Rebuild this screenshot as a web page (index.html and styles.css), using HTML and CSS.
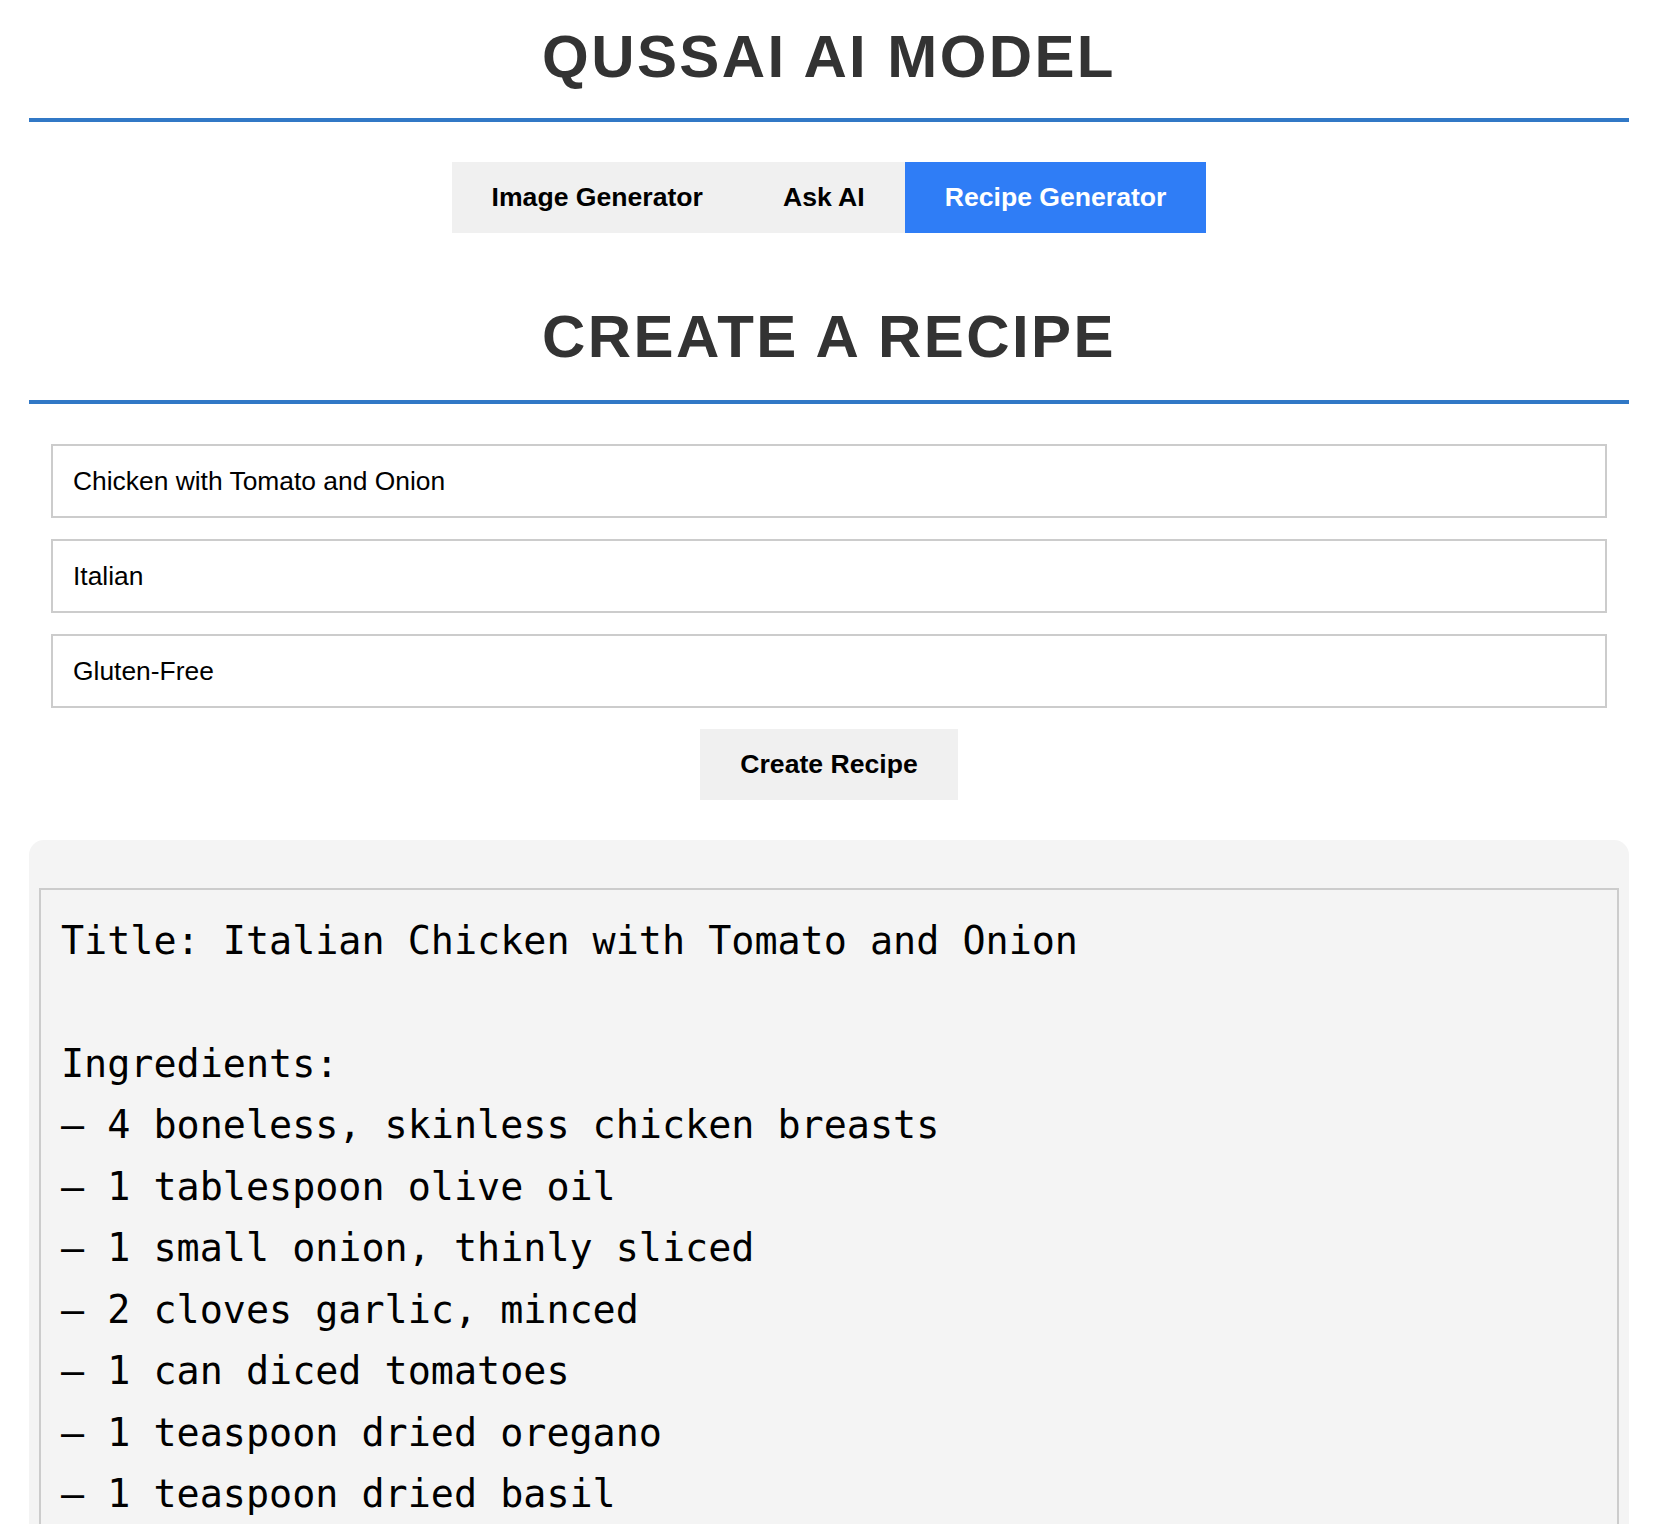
FILE: index.html
```html
<!DOCTYPE html>
<html lang="en">
<head>
<meta charset="utf-8">
<title>Qussai AI Model</title>
<link rel="stylesheet" href="styles.css">
</head>
<body>
<div class="page">
  <header class="site-header">
    <h1 class="site-title">QUSSAI AI MODEL</h1>
  </header>

  <nav class="tabs">
    <button class="tab">Image Generator</button>
    <button class="tab">Ask AI</button>
    <button class="tab tab-active">Recipe Generator</button>
  </nav>

  <section class="recipe">
    <h2 class="section-title">CREATE A RECIPE</h2>
    <form class="recipe-form">
      <input class="field" type="text" value="Chicken with Tomato and Onion">
      <input class="field" type="text" value="Italian">
      <input class="field" type="text" value="Gluten-Free">
      <div class="form-actions">
        <button type="button" class="action-btn">Create Recipe</button>
      </div>
    </form>

    <div class="result">
      <div class="result-text">Title: Italian Chicken with Tomato and Onion

Ingredients:
– 4 boneless, skinless chicken breasts
– 1 tablespoon olive oil
– 1 small onion, thinly sliced
– 2 cloves garlic, minced
– 1 can diced tomatoes
– 1 teaspoon dried oregano
– 1 teaspoon dried basil
– Salt and pepper to taste
– Fresh basil leaves, for garnish

Instructions:
1. Season the chicken breasts with salt and pepper.
2. Heat the olive oil in a large skillet over medium heat.</div>
    </div>
  </section>
</div>
</body>
</html>
```

FILE: styles.css
```css
* {
  box-sizing: border-box;
}

html, body {
  margin: 0;
  padding: 0;
  background: #ffffff;
}

body {
  font-family: "Liberation Sans", Arial, sans-serif;
  font-size: 24px;
  color: #000;
}

.page {
  max-width: 1600px;
  margin: 0 auto;
}

.site-header {
  padding-top: 22px;
  padding-bottom: 27px;
  border-bottom: 4px solid #3178c6;
}

.site-title,
.section-title {
  margin: 0;
  text-align: center;
  font-size: 60px;
  font-weight: bold;
  letter-spacing: 2.4px;
  color: #333333;
  line-height: normal;
}

.tabs {
  display: flex;
  justify-content: center;
  margin-top: 40px;
}

.tab,
.action-btn {
  font-family: "Liberation Sans", Arial, sans-serif;
  font-size: 26.6px;
  font-weight: bold;
  line-height: normal;
  padding: 20px 40px;
  border: none;
  margin: 0;
  background: #f0f0f0;
  color: #000;
  cursor: pointer;
}

.tab-active {
  background: #2f7df6;
  color: #ffffff;
}

.recipe {
  margin-top: 69px;
}

.section-title {
  padding-bottom: 29px;
  border-bottom: 4px solid #3178c6;
}

.recipe-form {
  margin: 40px 22px 0;
  display: flex;
  flex-direction: column;
  gap: 21px;
}

.field {
  display: block;
  width: 100%;
  height: 74px;
  padding: 0 20px;
  border: 2px solid #cccccc;
  font-family: "Liberation Sans", Arial, sans-serif;
  font-size: 26.4px;
  color: #000;
  background: #fff;
  outline: none;
}

.form-actions {
  display: flex;
  justify-content: center;
}

.result {
  margin-top: 40px;
  background: #f4f4f4;
  border-radius: 15px;
  padding: 48px 10px 10px;
}

.result-text {
  border: 2px solid #cccccc;
  padding: 20px;
  background: #f4f4f4;
  font-family: "DejaVu Sans Mono", monospace;
  font-size: 38.4px;
  line-height: 1.6;
  color: #000;
  white-space: pre-wrap;
}
```
